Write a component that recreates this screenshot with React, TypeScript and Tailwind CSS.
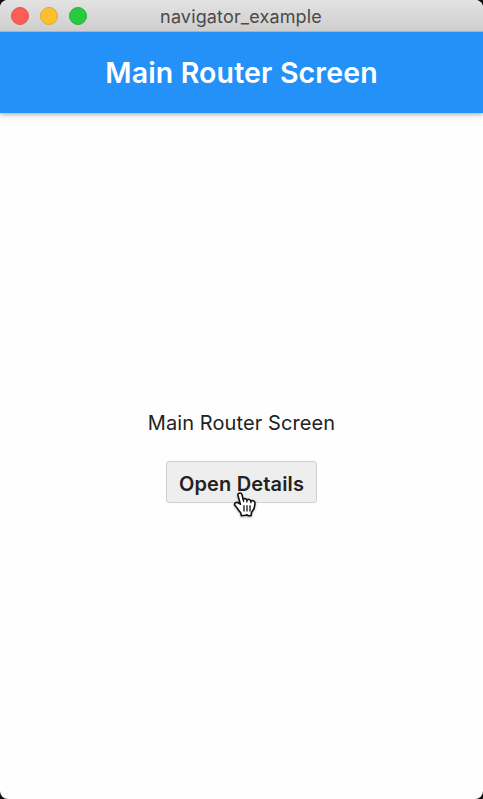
import React from "react";

function TitleBar() {
  return (
    <div className="flex h-8 shrink-0 items-center border-b border-[#b5b3b3] bg-linear-to-b from-[#e4e3e3] to-[#cfcece] px-[11px]">
      <div className="flex w-20 gap-[11px]">
        <span className="size-[18px] rounded-full border border-[#e2524b] bg-[#fc5d57]" />
        <span className="size-[18px] rounded-full border border-[#e0a82e] bg-[#fdbe30]" />
        <span className="size-[18px] rounded-full border border-[#25b236] bg-[#28cb40]" />
      </div>
      <span className="flex-1 pr-[81px] pt-[2px] text-center text-[18px] leading-none tracking-[0.15px] text-[#4b4949]">
        navigator_example
      </span>
    </div>
  );
}

function HandCursor() {
  return (
    <svg
      className="absolute left-[66px] top-[30px] drop-shadow-[0_1px_1px_rgba(0,0,0,0.25)]"
      width="26"
      height="28"
      viewBox="0 0 26 28"
      fill="none"
    >
      <path
        d="M8 2C6.2 2 5.6 3.3 6.1 5L8.4 13.3C7.2 12 5.1 11 3.6 11.7C1.9 12.5 2.4 14.1 3.6 15.3C5.6 17.4 6.5 19.6 8.6 21.6L9.4 24.7L13.2 24.2L15 23.9L16.3 24.7H19.1L19.5 21.6C21.2 19.6 22.9 16.8 22.9 13.4V11.6C22.9 9.6 19.8 9 18.9 10.4C18.7 8.2 15.8 7.7 14.9 9.1C14.2 7.4 12.2 7.2 11.1 8.2L10 3.8C9.6 2.5 8.9 2 8 2Z"
        fill="white"
        stroke="#111"
        strokeWidth="1.6"
        strokeLinejoin="round"
      />
      <path
        d="M11.1 8.2L11.8 11M14.9 9V11.5M18.9 10.4V12.2M12 14.2V20.5M15 14.2V20.5M18 14.2V20.5"
        stroke="#111"
        strokeWidth="1.3"
      />
    </svg>
  );
}

export default function App() {
  return (
    <div className="h-[799px] w-[483px] bg-[#111]">
      <div className="flex h-full flex-col overflow-hidden rounded-[8px] bg-[#fefefe] font-['Inter',sans-serif]">
        <TitleBar />
        <header className="z-10 flex h-[81px] shrink-0 items-center justify-center bg-[#2491f9] pt-[2px] shadow-[0_2px_3px_rgba(0,0,0,0.2),0_5px_6px_rgba(0,0,0,0.06)]">
          <h1 className="text-[28.5px] font-semibold leading-none tracking-[0.15px] text-white">
            Main Router Screen
          </h1>
        </header>
        <main className="flex flex-1 flex-col items-center pt-[298px]">
          <p className="text-[20px] leading-6 tracking-[0.1px] text-[#222]">Main Router Screen</p>
          <div className="relative mt-[26px]">
            <button className="h-[42px] w-[151px] whitespace-nowrap rounded-[3px] border border-[#cfcfcf] bg-[#eeeeee] pt-[3px] text-[20px] font-semibold tracking-[0.15px] text-[#222]">
              Open Details
            </button>
            <HandCursor />
          </div>
        </main>
      </div>
    </div>
  );
}
